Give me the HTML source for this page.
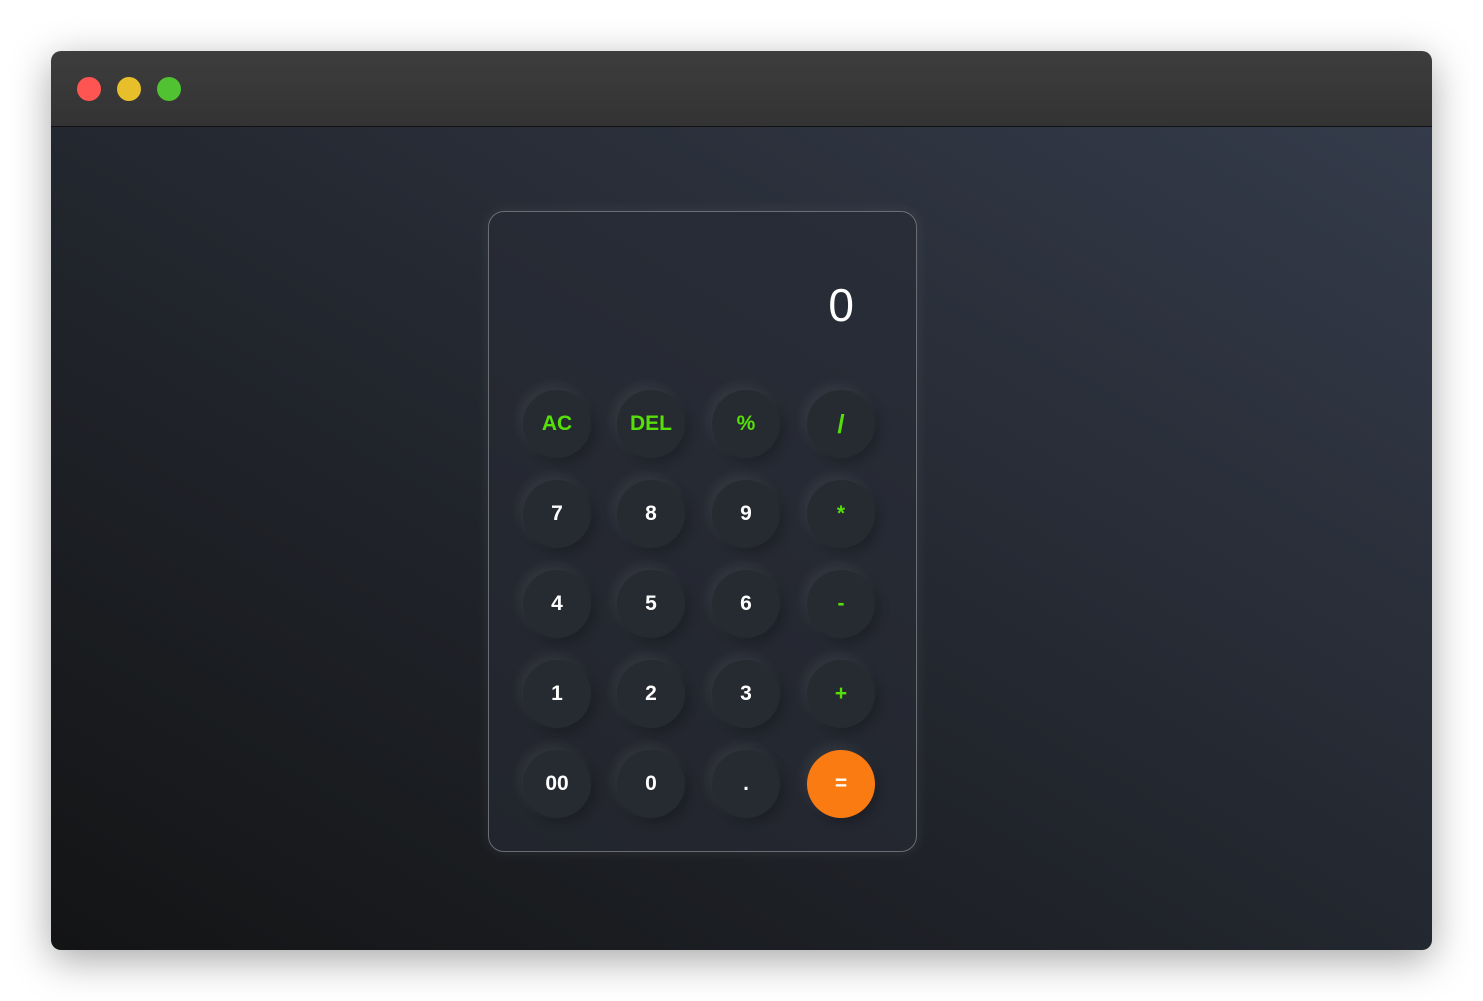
<!DOCTYPE html>
<html><head><style>
body{margin:0;width:1483px;height:1001px;background:#fff;position:relative;overflow:hidden;font-family:"Liberation Sans",sans-serif}
.win{position:absolute;left:51px;top:51px;width:1381px;height:899px;border-radius:10px;overflow:hidden;box-shadow:0 10px 40px rgba(0,0,0,.35)}
.tb{height:75px;background:linear-gradient(#3d3d3d,#333);border-bottom:1px solid #111}
.dot{position:absolute;top:26px;width:24px;height:24px;border-radius:50%}
.body{position:absolute;top:76px;left:0;right:0;bottom:0;background:linear-gradient(to top right,#131415 0%,#23272f 50%,#343b4a 100%)}
.card{position:absolute;left:437px;top:84px;width:427px;height:639px;border:1px solid #6a6d73;border-radius:16px;background:rgba(40,44,53,.6);box-shadow:0 0 14px rgba(255,255,255,.08)}
.disp{position:absolute;right:62px;top:66px;color:#fff;font-size:46px}
.b{position:absolute;width:68px;height:68px;border-radius:50%;background:#262a31;color:#fff;font-size:21px;font-weight:bold;display:flex;align-items:center;justify-content:center;box-shadow:-4px -5px 12px rgba(255,255,255,.07),5px 5px 10px rgba(0,0,0,.2)}
.g{color:#55e00a}
.eq{background:#fb7b13;color:#fff}
</style></head><body>
<div class="win"><div class="tb"></div>
<div class="dot" style="left:26px;background:#fe5552"></div>
<div class="dot" style="left:66px;background:#e6bf2b"></div>
<div class="dot" style="left:106px;background:#51c232"></div>
<div class="body"><div class="card"><div class="disp">0</div>
<div class="b g" style="left:34px;top:178px">AC</div>
<div class="b g" style="left:128px;top:178px">DEL</div>
<div class="b g" style="left:223px;top:178px">%</div>
<div class="b g" style="left:318px;top:178px;font-size:26px">/</div>
<div class="b" style="left:34px;top:268px">7</div>
<div class="b" style="left:128px;top:268px">8</div>
<div class="b" style="left:223px;top:268px">9</div>
<div class="b g" style="left:318px;top:268px">*</div>
<div class="b" style="left:34px;top:358px">4</div>
<div class="b" style="left:128px;top:358px">5</div>
<div class="b" style="left:223px;top:358px">6</div>
<div class="b g" style="left:318px;top:358px">-</div>
<div class="b" style="left:34px;top:448px">1</div>
<div class="b" style="left:128px;top:448px">2</div>
<div class="b" style="left:223px;top:448px">3</div>
<div class="b g" style="left:318px;top:448px">+</div>
<div class="b" style="left:34px;top:538px">00</div>
<div class="b" style="left:128px;top:538px">0</div>
<div class="b" style="left:223px;top:538px">.</div>
<div class="b eq" style="left:318px;top:538px">=</div>
</div></div></div>
</body></html>
